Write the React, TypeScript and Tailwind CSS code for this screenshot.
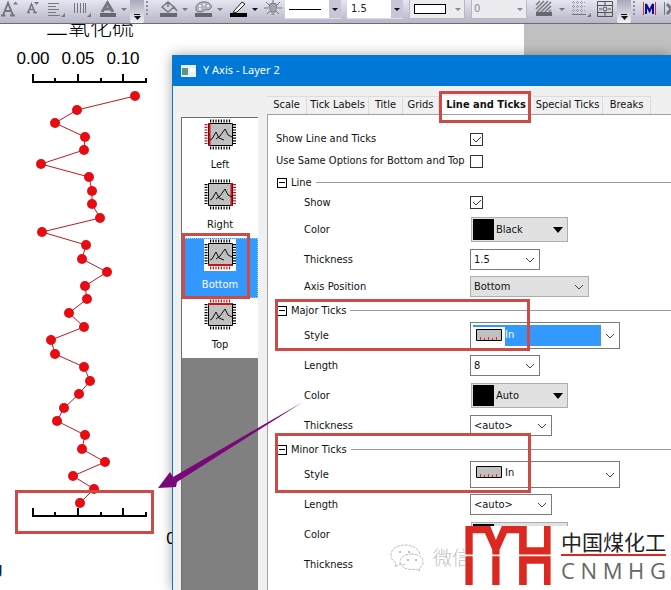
import { ReactNode, useState } from 'react'
import clsx from 'clsx'

const uiFont =
  "font-['DejaVu_Sans_Condensed','DejaVu_Sans','Noto_Sans_CJK_SC',sans-serif]"

const POINTS = [
  135, 77, 55, 85, 84, 41, 89, 92, 92, 100, 42, 86, 82, 107, 85, 87, 69, 84, 51,
  55, 84, 90, 79, 64, 57, 85, 82, 105, 73, 94, 80,
].map((x, i) => ({ x, y: Math.round(96 + i * 13.56) }))

/* ---------- toolbar ---------- */

function Tool({
  label,
  className,
  children,
}: {
  label: string
  className: string
  children: ReactNode
}) {
  return (
    <button
      type="button"
      aria-label={label}
      className={clsx('h-6 shrink-0', className)}
    >
      <svg className="h-6 w-full" fill="none" stroke="#77777f">
        {children}
      </svg>
    </button>
  )
}

function Caret({ active }: { active?: boolean }) {
  return (
    <Tool label="More" className="w-[11px]">
      <path d="M2 8h6l-3 3z" fill={active ? '#111' : '#77777f'} stroke="none" />
    </Tool>
  )
}

function Overflow() {
  return (
    <Tool
      label="Toolbar options"
      className="w-[14px] rounded-b bg-linear-to-b from-[#a9a9bb] to-[#f4f4fa]"
    >
      <path d="M4 14.500h6" stroke="#111" />
      <path d="M4 16h7l-3.500 4z" fill="#111" stroke="none" />
    </Tool>
  )
}

function Grip() {
  return (
    <svg className="h-6 w-2 shrink-0">
      <path d="M3 1v16" stroke="#8f8f9c" strokeWidth="2" strokeDasharray="2 2" />
    </svg>
  )
}

function ToolCombo({
  disabled,
  label,
  children,
}: {
  disabled?: boolean
  label: string
  children: ReactNode
}) {
  return (
    <button
      type="button"
      aria-label={label}
      disabled={disabled}
      className={clsx(
        'mr-1.5 flex h-[19px] w-14 shrink-0 items-center justify-between border-b text-[11px]',
        disabled
          ? 'border border-t-0 border-[#b9b9c2] bg-[#ececf0] text-[#8a8a8a]'
          : 'border-[#dcdce6] bg-white text-[#222]'
      )}
    >
      {children}
      <svg
        className={clsx('h-full w-3', !disabled && 'bg-[#c6c6d6]')}
        viewBox="0 0 12 18"
      >
        <path d="M3 8h6l-3 3z" fill={disabled ? '#8a8a8a' : '#111'} />
      </svg>
    </button>
  )
}

function Toolbar() {
  return (
    <header className="z-20 flex h-6 shrink-0 overflow-hidden border-b border-[#6d6d75] bg-linear-to-b from-[#e6e6f1] to-[#b7b6c8]">
      <Tool label="Increase font" className="w-[22px]">
        <path d="M3 15.500 8 3l5 12.500M5 11h6M1 15.500h4.500M10 15.500h5" strokeWidth="2" />
        <path d="M13 4.500h5l-2.500-3z" fill="#77777f" stroke="none" />
      </Tool>
      <Tool label="Decrease font" className="w-[21px]">
        <path d="M6 12.500 9.500 4l3.500 8.500M7.500 9.500h4M5 12.500h3M11 12.500h4" strokeWidth="1.500" />
        <path d="M12 2h5l-2.500 3z" fill="#77777f" stroke="none" />
      </Tool>
      <Tool label="Align" className="w-[26px]">
        <path d="M5 3.500h11M5 6.500h8M5 9.500h11M5 12.500h8M5 15.500h12" />
        <path d="M22 13v4h-4z" fill="#77777f" stroke="none" />
      </Tool>
      <Tool label="Distribute" className="w-[26px]">
        <path d="M5.500 3v10M8.500 3v10M11.500 3v10M14.500 3v10M16.500 3v10" />
        <path d="M22 13v4h-4z" fill="#77777f" stroke="none" />
      </Tool>
      <Tool label="Font color" className="w-6">
        <path d="M7 12 12.500 3 18 12M9 9h7" strokeWidth="3" />
        <path d="M5 13h16v4H5z" fill="#66666e" stroke="none" />
      </Tool>
      <Caret />
      <Overflow />
      <Grip />
      <Tool label="Fill color" className="ml-1 w-6">
        <path d="m6 7 6-5 6 5-6 5zM12 2v5M18 7l3 4" strokeWidth="1.500" fill="#d3d3de" />
        <path d="M4 13h17v4H4z" fill="#66666e" stroke="none" />
      </Tool>
      <Caret />
      <Tool label="Palette" className="w-6">
        <path d="M5 9c-1-5 5-8 10-7s7 5 4 7-3 0-5 1-2 2-5 2-4-1-4-3z" fill="#b4b4bf" />
        <path d="M8 6h2M12 4.500h2M16 6h2M8 9h2" stroke="#eee" strokeWidth="2" />
        <path d="M4 13h17v4H4z" fill="#66666e" stroke="none" />
      </Tool>
      <Caret />
      <Tool label="Line color" className="w-6">
        <path d="m8 11 8-9 3 2-8 8-4 1z" fill="#f6f6f6" stroke="#222" />
        <path d="M4 13h17v4H4z" fill="#000" stroke="none" />
      </Tool>
      <Caret active />
      <Tool label="Light" className="w-[24px]">
        <path d="M12 0v3M3 8h4M17 8h4M5 2l3 3M19 2l-3 3M6 14l3-3M18 14l-3-3" />
        <path d="M8 7a4 4 0 0 1 8 0c0 2-2 3-2 5h-4c0-2-2-3-2-5zM10.500 14h3" fill="#a5a5ae" />
      </Tool>
      <ToolCombo label="Line style">
        <span className="ml-1 h-px w-8 bg-black" />
      </ToolCombo>
      <ToolCombo label="Line width">
        <span className="ml-1">1.5</span>
      </ToolCombo>
      <ToolCombo label="Border" disabled>
        <span className="ml-1 h-2.5 w-8 border border-black bg-white" />
      </ToolCombo>
      <ToolCombo label="Pattern size" disabled>
        <span className="ml-0.5">0</span>
      </ToolCombo>
      <Tool label="Pattern" className="w-6">
        <path d="m3 5 4-4M3 9l8-8M4 12 15 1M8 12 18 2M12 12l6-6M16 12l2-2" strokeWidth="1.500" />
        <path d="M3 12h16v4H3z" fill="#66666e" stroke="none" />
      </Tool>
      <Caret />
      <Tool label="Grid" className="w-[26px]">
        <path d="M4 2.500h13M4 6.500h13M4 10.500h13M5.500 1v13M9.500 1v13M13.500 1v13" stroke="#9a9aa4" strokeDasharray="1 1" />
        <path d="M4 14.500h14" />
        <path d="M23 13v4h-4z" fill="#77777f" stroke="none" />
      </Tool>
      <Tool label="Table" className="w-[23px]">
        <path d="M3.500 1.500h15v15h-15zM3.500 5.500h15M3.500 12.500h15M11 1v4M11 13v3M5 9h3M14 9h3" stroke="#555" />
        <circle cx="11" cy="9" r="2" stroke="#555" />
      </Tool>
      <Overflow />
      <Grip />
      <Tool label="Mask" className="w-[21px]">
        <path d="M4.500 2v13M16.500 2v13" stroke="#c33" />
        <path d="M7 14V4l3.500 7L14 4v10" stroke="#0c0c9c" strokeWidth="2" />
      </Tool>
      <Tool label="Unmask" className="w-5">
        <path d="M4.500 2v13" />
        <path d="m7 4 9 10M16 4 7 14" strokeWidth="3" />
      </Tool>
    </header>
  )
}

/* ---------- graph page ---------- */

function Axis({ y }: { y: number }) {
  return (
    <path
      d={`M33 ${y - 8}v8h113v-4M78 ${y - 8}v8M123 ${y - 8}v8M55 ${y - 4}v4M101 ${y - 4}v4`}
      fill="none"
      stroke="#000"
      strokeWidth="2"
    />
  )
}

function GraphPage() {
  return (
    <svg
      viewBox="0 24 172 566"
      className="h-[566px] w-[172px] shrink-0 overflow-hidden bg-white font-['Liberation_Sans','Noto_Sans_CJK_SC',sans-serif]"
    >
      <text x="46" y="35" fontSize="22" fontWeight="300">
        二氧化硫
      </text>
      <g fontSize="17" textAnchor="middle">
        <text x="33" y="64">0.00</text>
        <text x="78" y="64">0.05</text>
        <text x="123" y="64">0.10</text>
        <text x="171" y="544">0</text>
      </g>
      <text x="-7" y="574" fontSize="17" fill="#0b1a3a">
        g
      </text>
      <Axis y={82} />
      <Axis y={516} />
      <polyline
        points={POINTS.map((p) => `${p.x},${p.y}`).join(' ')}
        fill="none"
        stroke="#c01820"
      />
      {POINTS.map((p) => (
        <circle key={p.y} cx={p.x} cy={p.y} r="5" fill="#e80c12" />
      ))}
    </svg>
  )
}

/* ---------- dialog ---------- */

const SIDES = {
  Left: { bar: 'M5.500 4v23', teeth: 'M2 5v21' },
  Right: { bar: 'M27.500 4v23', teeth: 'M30.500 5v21' },
  Bottom: { bar: 'M4 26h24', teeth: 'M6 29h21' },
  Top: { bar: 'M4 5h24', teeth: 'M6 2h21' },
}
type Side = keyof typeof SIDES
const sideNames = Object.keys(SIDES) as Side[]

function LayerIcon({ side }: { side: Side }) {
  return (
    <svg className="h-8 w-8 bg-white" fill="none">
      <path d="M4.500 4.500h24v22h-24z" fill="#c0c0c0" stroke="#000" />
      {sideNames.map((s) => (
        <path
          key={s}
          d={SIDES[s].teeth}
          stroke={s === side ? '#c8141c' : '#000'}
          strokeWidth="3"
          strokeDasharray="1.200 1.500"
        />
      ))}
      <path d={SIDES[side].bar} stroke="#c8141c" strokeWidth="2" />
      <path d="m6 21 2-1 4-7 3 6 5 2M12 20l4-3 5-7 3 6 4 2" stroke="#111" />
    </svg>
  )
}

function Chevron() {
  return (
    <svg
      className="pointer-events-none mr-1 h-2 w-2.5 shrink-0 self-center"
      viewBox="0 0 10 8"
    >
      <path d="m1 2 4 4 4-4" fill="none" stroke="#444" />
    </svg>
  )
}

function Row({
  id,
  label,
  className,
  indent = true,
  children,
}: {
  id: string
  label: string
  className: string
  indent?: boolean
  children: ReactNode
}) {
  return (
    <div className={clsx('flex items-center', className)}>
      <label
        htmlFor={id}
        className={clsx(
          'w-[194px] shrink-0 whitespace-nowrap',
          indent && 'pl-7'
        )}
      >
        {label}
      </label>
      {children}
    </div>
  )
}

function Check({ id, checked }: { id: string; checked?: boolean }) {
  const [on, setOn] = useState(!!checked)
  return (
    <span className="grid">
      <input
        id={id}
        type="checkbox"
        checked={on}
        onChange={(e) => setOn(e.target.checked)}
        className="col-start-1 row-start-1 h-[13px] w-[13px] appearance-none border border-[#333] bg-white"
      />
      {on && (
        <svg className="pointer-events-none col-start-1 row-start-1 h-[13px] w-[13px]">
          <path d="m3 6 3 3 5-5" fill="none" stroke="#333" />
        </svg>
      )}
    </span>
  )
}

const selectClassName = 'h-full min-w-0 flex-1 appearance-none outline-none'

function Combo({
  id,
  value,
  className,
}: {
  id: string
  value: string
  className: string
}) {
  return (
    <div className={clsx('flex h-[21px] border pl-[3px]', className)}>
      <select id={id} className={selectClassName}>
        <option>{value}</option>
      </select>
      <Chevron />
    </div>
  )
}

function ColorCombo({ id, value }: { id: string; value: string }) {
  return (
    <div className="ml-px flex h-[25px] w-[97px] items-center border border-[#adadad] bg-[#e1e1e1] pl-px">
      <span className="mr-0.5 h-[21px] w-[21px] bg-black" />
      <select id={id} className={selectClassName}>
        <option>{value}</option>
      </select>
      <svg className="pointer-events-none mr-1 h-2 w-2.5" viewBox="0 0 10 8">
        <path d="M0 1h10L5 7z" />
      </svg>
    </div>
  )
}

function StyleCombo({ id, focused }: { id: string; focused?: boolean }) {
  return (
    <div className="flex h-[27px] w-[150px] border border-[#7a7a7a] bg-white">
      <div
        className={clsx(
          'my-0.5 ml-0.5 flex h-[21px] flex-1',
          focused && 'border-t-2 border-[#3399ff]'
        )}
      >
        <svg className="h-[17px] w-8 shrink-0" fill="none">
          <path d="M3.500 2.500h25v11h-25z" fill="#c0c0c0" stroke="#000" />
          <path d="M7.500 10v3M11.500 11v2M15.500 10v3M19.500 11v2M23.500 10v3" stroke="#e22" />
        </svg>
        <select
          id={id}
          className={clsx(
            'min-w-0 flex-1 appearance-none pb-1 outline-none',
            focused && 'bg-[#3399ff] text-white'
          )}
        >
          <option>In</option>
        </select>
      </div>
      <div className="flex w-[18px] justify-end">
        <Chevron />
      </div>
    </div>
  )
}

function Group({ title, className }: { title: string; className: string }) {
  return (
    <div className={clsx('flex items-center', className)}>
      <button
        type="button"
        aria-label={`Collapse ${title}`}
        className="mr-1 ml-px flex h-2.5 w-2.5 items-center justify-center border border-black"
      >
        <span className="h-px w-1.5 bg-black" />
      </button>
      <h2>{title}</h2>
      <span className="ml-1 h-px flex-1 bg-[#9a9a9a]" />
    </div>
  )
}

const white = 'border-[#7a7a7a] bg-white'

function AxisForm() {
  return (
    <form className="flex-1 overflow-hidden border-t border-l border-[#a0a0a8] bg-white pt-[13px] pl-2 leading-4">
      <Row id="showLine" label="Show Line and Ticks" indent={false} className="h-[22px]">
        <Check id="showLine" checked />
      </Row>
      <Row
        id="same"
        label="Use Same Options for Bottom and Top"
        indent={false}
        className="h-[22px]"
      >
        <Check id="same" />
      </Row>

      <Group title="Line" className="h-[21px]" />
      <Row id="show" label="Show" className="h-[19px]">
        <Check id="show" checked />
      </Row>
      <Row id="lineColor" label="Color" className="h-[35px]">
        <ColorCombo id="lineColor" value="Black" />
      </Row>
      <Row id="lineThickness" label="Thickness" className="h-[25px]">
        <Combo id="lineThickness" value="1.5" className={clsx(white, 'w-[70px]')} />
      </Row>
      <Row id="position" label="Axis Position" className="h-[29px]">
        <Combo
          id="position"
          value="Bottom"
          className="w-[119px] border-[#adadad] bg-[#e1e1e1]"
        />
      </Row>

      <Group title="Major Ticks" className="h-[19px]" />
      <Row id="majorStyle" label="Style" className="h-[31px]">
        <StyleCombo id="majorStyle" focused />
      </Row>
      <Row id="majorLength" label="Length" className="h-[29px]">
        <Combo id="majorLength" value="8" className={clsx(white, 'w-[70px]')} />
      </Row>
      <Row id="majorColor" label="Color" className="h-[31px]">
        <ColorCombo id="majorColor" value="Auto" />
      </Row>
      <Row id="majorThickness" label="Thickness" className="h-[29px]">
        <Combo id="majorThickness" value="<auto>" className={clsx(white, 'w-[82px]')} />
      </Row>

      <Group title="Minor Ticks" className="h-[19px]" />
      <Row id="minorStyle" label="Style" className="h-[31px]">
        <StyleCombo id="minorStyle" />
      </Row>
      <Row id="minorLength" label="Length" className="h-[29px]">
        <Combo id="minorLength" value="<auto>" className={clsx(white, 'w-[82px]')} />
      </Row>
      <Row id="minorColor" label="Color" className="h-[31px]">
        <ColorCombo id="minorColor" value="Auto" />
      </Row>
      <Row id="minorThickness" label="Thickness" className="h-[29px]">
        <Combo id="minorThickness" value="<auto>" className={clsx(white, 'w-[82px]')} />
      </Row>
    </form>
  )
}

const TABS = [
  { name: 'Scale', width: 'w-10' },
  { name: 'Tick Labels', width: 'w-[62px]' },
  { name: 'Title', width: 'w-[34px]' },
  { name: 'Grids', width: 'w-9' },
  { name: 'Line and Ticks', width: 'w-[94px]' },
  { name: 'Special Ticks', width: 'w-[70px]' },
  { name: 'Breaks', width: 'w-12' },
]

function Dialog() {
  const [tab, setTab] = useState('Line and Ticks')
  const [side, setSide] = useState<Side>('Bottom')

  return (
    <section className="z-10 flex flex-1 flex-col border-l border-[#0f78c8] bg-[#f0f0f0] shadow-[0_0_12px_rgba(0,0,0,0.35)]">
      <div className="flex h-[31px] items-center gap-1.5 bg-[#0078d7] pl-2 text-white">
        <svg className="h-3 w-4">
          <path d="M0 0h15v12H0z" fill="#e8eef2" />
          <path d="M1 3h6v7H1z" fill="#5d9585" />
          <path d="M9 3h5v4H9z" fill="#fff" />
        </svg>
        <h1 className="font-['Noto_Sans',sans-serif] text-[11px]">
          Y Axis - Layer 2
        </h1>
      </div>
      <div className="flex flex-1 pt-2.5 pl-2">
        <ul className="mt-[21px] flex w-[77px] flex-col border-t border-l border-[#6e6e6e] bg-[#808080]">
          {sideNames.map((s) => (
            <li key={s}>
              <button
                type="button"
                onClick={() => setSide(s)}
                className={clsx(
                  'flex h-[60px] w-full flex-col items-center gap-1.5 leading-4',
                  s === side
                    ? 'border border-dotted border-[#9cf] bg-[#3399ff] text-white'
                    : 'bg-white pt-px'
                )}
              >
                <LayerIcon side={s} />
                {s}
              </button>
            </li>
          ))}
        </ul>
        <div className="ml-[9px] flex min-w-0 flex-1 flex-col">
          <div role="tablist" className="flex h-[18px] whitespace-nowrap">
            {TABS.map(({ name, width }) => (
              <button
                key={name}
                type="button"
                role="tab"
                aria-selected={name === tab}
                onClick={() => setTab(name)}
                className={clsx(
                  'shrink-0',
                  width,
                  name === tab
                    ? '-mb-px h-[19px] bg-white font-bold'
                    : 'border-t border-r border-[#dcdcdc]'
                )}
              >
                {name}
              </button>
            ))}
          </div>
          <AxisForm />
        </div>
      </div>
    </section>
  )
}

/* ---------- marks and logo over the page ---------- */

function Marks() {
  return (
    <svg className="pointer-events-none absolute top-0 left-0 z-20 h-[590px] w-[671px]">
      <g fill="none" stroke="#cd4b46" strokeWidth="3">
        <path d="M440.500 92.500h89v29h-89z" />
        <path d="M183.500 234.500h65v63h-65z" />
        <path d="M276.500 300.500h252v49h-252z" />
        <path d="M276.500 434.500h253v57h-253z" />
        <path d="M16.500 491.500h136v41h-136z" />
      </g>
      <path d="m158 488 12-16 3 5L303 402 177 482l-1 5z" fill="#780878" />
    </svg>
  )
}

function Brand() {
  return (
    <div className="absolute right-0 bottom-0 z-30 flex h-16 items-center">
      <div className="flex items-center gap-2 text-[19px] text-[#c2c2c2]">
        <svg className="h-7 w-9" fill="none" stroke="#bdbdbd">
          <path d="M31 10C29 4 23 1 16 1 8 1 2 5 2 11c0 4 2 6 5 8l-1 4 5-3 5 1" strokeDasharray="3 1" />
          <path d="M22 10c7 0 12 3 12 8 0 3-1 5-4 6l1 3-4-2c-9 2-16-2-16-7s5-8 11-8z" strokeDasharray="3 1" />
          <path d="M10 8h2M19 8h2M18 16h2M26 16h2" strokeWidth="2" />
        </svg>
        <span className="-mr-1.5 font-light">微信</span>
      </div>
      <div className="z-10 flex h-full items-start bg-white pr-[5px]">
        <svg className="mr-2.5 h-[59px] w-[86px]" viewBox="285 78 257 178" fill="#dc2820">
          <path d="M285 78h75l17 42 18-42h75v64h52V78h20v86h-95v-64h-37l-22 50v14h-22v-14l-22-50h-37v64h-22z" />
          <path d="M285 169h22v87h-22zM366 169h22v87h-22zM447 169h95v87h-20v-64h-52v64h-23z" />
        </svg>
        <div className="w-[105px] pt-[3px] text-[#222]">
          <p className="font-['Noto_Sans_CJK_SC',sans-serif] text-[21px] leading-6">
            中国煤化工
          </p>
          <div className="mt-px h-0.5 bg-[#dc2820]" />
          <p className="mt-0.5 flex justify-between font-['Open_Sans',sans-serif] text-[22px] leading-6 text-[#666]">
            {[...'CNMHG'].map((c) => (
              <span key={c}>{c}</span>
            ))}
          </p>
        </div>
      </div>
    </div>
  )
}

export default function App() {
  return (
    <div
      className={clsx(
        'relative flex min-h-screen flex-col overflow-hidden bg-white text-[11px] text-[#111]',
        uiFont
      )}
    >
      <Toolbar />
      <main className="flex flex-1">
        <GraphPage />
        <div className="flex min-w-0 flex-1 flex-col">
          <div className="flex h-[31px]">
            <div className="w-[352px] bg-white" />
            <div className="flex-1 bg-[#c0c0c0]" />
          </div>
          <Dialog />
        </div>
      </main>
      <Marks />
      <Brand />
    </div>
  )
}
